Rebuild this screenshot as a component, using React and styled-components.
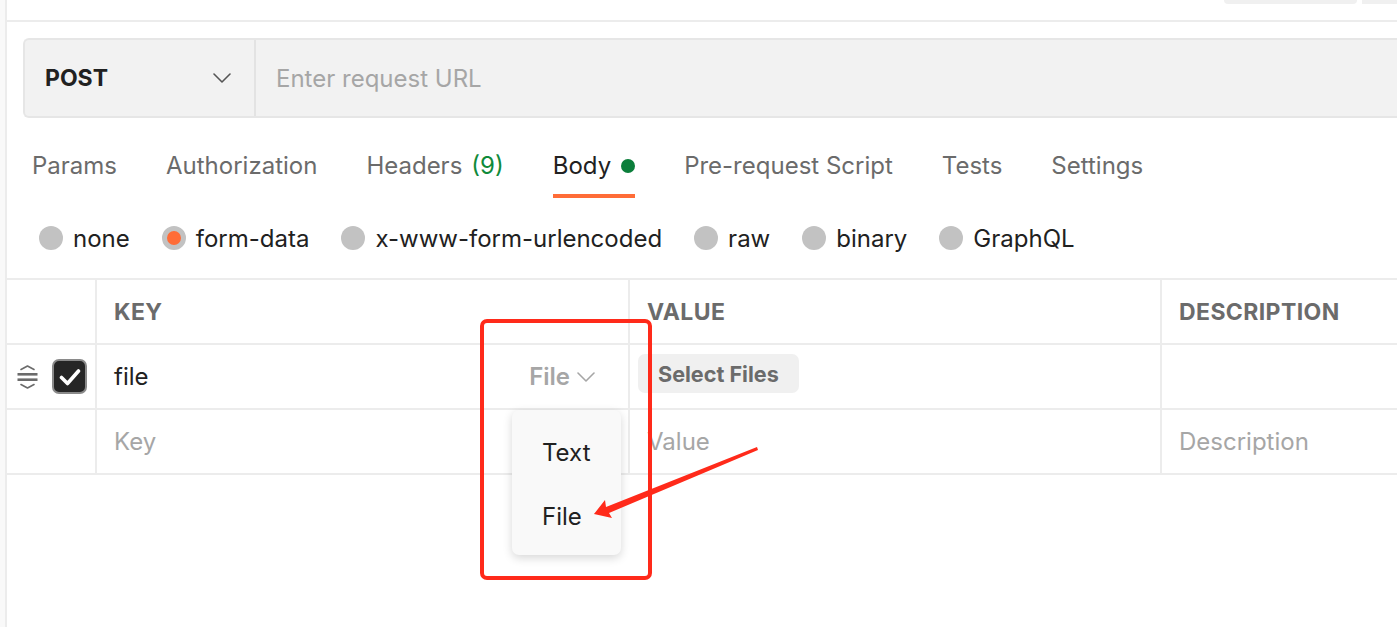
import React from "react";
import styled, { createGlobalStyle } from "styled-components";

const GlobalStyle = createGlobalStyle`
  html, body { margin: 0; padding: 0; background: #ffffff; }
  body { font-family: Inter, "Noto Sans", "Liberation Sans", sans-serif; color: #212121; }
  * { box-sizing: border-box; }
`;

const Shell = styled.div`
  position: relative;
  display: flex;
  width: 1397px;
  height: 627px;
  overflow: hidden;
  background: #f9f9f9;
`;

const Main = styled.div`
  flex: 1;
  margin-left: 5px;
  border-left: 2px solid #ececec;
  background: #ffffff;
  min-width: 0;
`;

const TopBar = styled.div`
  height: 22px;
  border-bottom: 2px solid #ececec;
  display: flex;
  justify-content: flex-end;
  align-items: flex-start;
  gap: 5px;
`;

const TopChip = styled.div`
  width: ${(p) => p.$w}px;
  height: 4px;
  background: #f0f0f0;
  border-radius: ${(p) => (p.$round ? "0 0 6px 6px" : "0")};
`;

const UrlBar = styled.div`
  margin: 16px 0 0 16px;
  width: 1400px;
  height: 80px;
  display: flex;
  background: #f2f2f2;
  border: 2px solid #e6e6e6;
  border-right: none;
  border-radius: 6px 0 0 6px;
`;

const Method = styled.div`
  width: 231px;
  flex: none;
  display: flex;
  align-items: center;
  justify-content: space-between;
  padding: 0 23px 0 20px;
  border-right: 2px solid #e3e3e3;
  font-size: 23px;
  font-weight: 700;
  color: #212121;
`;

const UrlInput = styled.div`
  flex: 1;
  display: flex;
  align-items: center;
  padding-left: 20px;
  font-size: 24px;
  color: #a6a6a6;
`;

const Tabs = styled.div`
  display: flex;
  gap: 49px;
  padding-left: 25px;
`;

const Tab = styled.div`
  display: flex;
  align-items: center;
  gap: 10px;
  padding: 33px 0 13px;
  line-height: 30px;
  font-size: 24px;
  color: ${(p) => (p.$active ? "#212121" : "#6b6b6b")};
  border-bottom: 4px solid ${(p) => (p.$active ? "#ff6c37" : "transparent")};
`;

const Count = styled.span`
  color: #0f8a3a;
  margin-left: 9px;
`;

const Dot = styled.span`
  width: 14px;
  height: 14px;
  border-radius: 50%;
  background: #0b7e3b;
`;

const BodyTypes = styled.div`
  height: 82px;
  display: flex;
  align-items: center;
  gap: 32px;
  padding-left: 32px;
  border-bottom: 2px solid #ececec;
`;

const RadioItem = styled.div`
  display: flex;
  align-items: center;
  gap: 10px;
  font-size: 24px;
  color: #212121;
`;

const Radio = styled.span`
  width: 24px;
  height: 24px;
  border-radius: 50%;
  background: ${(p) => (p.$checked ? "#ff6c37" : "#c2c2c2")};
  border: ${(p) => (p.$checked ? "5px solid #c2c2c2" : "none")};
`;

const Row = styled.div`
  display: grid;
  grid-template-columns: 90px 533px 532px 1fr;
  height: 65px;
  border-bottom: 2px solid #ececec;
`;

const Cell = styled.div`
  position: relative;
  display: flex;
  align-items: center;
  gap: ${(p) => p.$gap || 0}px;
  justify-content: ${(p) => p.$justify || "flex-start"};
  padding: ${(p) => p.$pad || "0 17px"};
  border-right: ${(p) => (p.$last ? "none" : "2px solid #ececec")};
  font-size: 24px;
  color: ${(p) => (p.$muted ? "#a6a6a6" : "#212121")};
`;

const HeadText = styled.span`
  font-size: 23px;
  font-weight: 700;
  letter-spacing: 0.4px;
  color: #6b6b6b;
`;

const Check = styled.span`
  width: 35px;
  height: 35px;
  border-radius: 7px;
  background: #262626;
  border: 2px solid #8a8a8a;
  display: flex;
  align-items: center;
  justify-content: center;
`;

const TypeSelect = styled.span`
  display: flex;
  align-items: center;
  gap: 7px;
  font-size: 24px;
  font-weight: 600;
  color: #a6a6a6;
`;

const SelectFiles = styled.span`
  height: 39px;
  display: flex;
  align-items: center;
  padding: 0 20px;
  border-radius: 7px;
  background: #f0f0f0;
  font-size: 21.6px;
  font-weight: 700;
  color: #6b6b6b;
  margin-top: -6px;
`;

const Menu = styled.div`
  position: absolute;
  z-index: 5;
  right: 7px;
  top: calc(100% + 2px);
  width: 109px;
  padding: 10px 0 7px;
  background: #f9f9f9;
  border-radius: 7px;
  box-shadow: 0 3px 10px rgba(0, 0, 0, 0.16);
`;

const MenuItem = styled.div`
  height: 64px;
  display: flex;
  align-items: center;
  padding-left: 30px;
  font-size: 24px;
  color: #212121;
`;

const Highlight = styled.div`
  position: absolute;
  z-index: 10;
  left: 480px;
  top: 319px;
  width: 172px;
  height: 261px;
  border: 4px solid #ff2a1a;
  border-radius: 7px;
  pointer-events: none;
`;

const ArrowLayer = styled.svg`
  position: absolute;
  z-index: 11;
  left: 0;
  top: 0;
  pointer-events: none;
`;

const Chevron = ({ w = 18, h = 10, color = "#555" }) => (
  <svg width={w} height={h} viewBox="0 0 18 10" fill="none">
    <path d="M1 1l8 8 8-8" stroke={color} strokeWidth="1.6" strokeLinecap="round" strokeLinejoin="round" />
  </svg>
);

const DragHandle = () => (
  <svg width="21" height="24" viewBox="0 0 21 24" fill="none">
    <path d="M4 4.5L10.5 1L17 4.5" stroke="#6b6b6b" strokeWidth="1.6" strokeLinecap="round" strokeLinejoin="round" />
    <rect x="0.5" y="8" width="20" height="2.6" fill="#6b6b6b" />
    <rect x="0.5" y="13.4" width="20" height="2.6" fill="#6b6b6b" />
    <path d="M4 19.5L10.5 23L17 19.5" stroke="#6b6b6b" strokeWidth="1.6" strokeLinecap="round" strokeLinejoin="round" />
  </svg>
);

const tabs = [
  { label: "Params" },
  { label: "Authorization" },
  { label: "Headers", count: "(9)" },
  { label: "Body", active: true, dot: true },
  { label: "Pre-request Script" },
  { label: "Tests" },
  { label: "Settings" },
];

const bodyTypes = ["none", "form-data", "x-www-form-urlencoded", "raw", "binary", "GraphQL"];

export default function App() {
  return (
    <>
      <GlobalStyle />
      <Shell>
        <Main>
          <TopBar>
            <TopChip $w={133} $round />
            <TopChip $w={35} />
          </TopBar>
          <UrlBar>
            <Method>
              POST
              <Chevron color="#555" />
            </Method>
            <UrlInput>Enter request URL</UrlInput>
          </UrlBar>
          <Tabs>
            {tabs.map((t) => (
              <Tab key={t.label} $active={t.active}>
                <span>
                  {t.label}
                  {t.count && <Count>{t.count}</Count>}
                </span>
                {t.dot && <Dot />}
              </Tab>
            ))}
          </Tabs>
          <BodyTypes>
            {bodyTypes.map((b) => (
              <RadioItem key={b}>
                <Radio $checked={b === "form-data"} />
                {b}
              </RadioItem>
            ))}
          </BodyTypes>
          <Row>
            <Cell />
            <Cell><HeadText>KEY</HeadText></Cell>
            <Cell><HeadText>VALUE</HeadText></Cell>
            <Cell $last><HeadText>DESCRIPTION</HeadText></Cell>
          </Row>
          <Row>
            <Cell $pad="0 0 0 10px" $gap={14}>
              <DragHandle />
              <Check>
                <svg width="22" height="18" viewBox="0 0 22 18" fill="none">
                  <path d="M2.5 9.5l6 6L19.5 3" stroke="#fff" strokeWidth="3.6" strokeLinecap="round" strokeLinejoin="round" />
                </svg>
              </Check>
            </Cell>
            <Cell $justify="space-between" $pad="0 33px 0 17px">
              file
              <TypeSelect>
                File
                <Chevron color="#a6a6a6" />
              </TypeSelect>
              <Menu>
                <MenuItem>Text</MenuItem>
                <MenuItem>File</MenuItem>
              </Menu>
            </Cell>
            <Cell $pad="0 0 0 8px">
              <SelectFiles>Select Files</SelectFiles>
            </Cell>
            <Cell $last />
          </Row>
          <Row>
            <Cell />
            <Cell $muted>Key</Cell>
            <Cell $muted>Value</Cell>
            <Cell $muted $last>Description</Cell>
          </Row>
        </Main>
        <Highlight />
        <ArrowLayer width="1397" height="627" viewBox="0 0 1397 627">
          <polygon
            points="594,514 605,500 606,507 757,447 758,450 609,513 612,518"
            fill="#ff2a1a"
          />
        </ArrowLayer>
      </Shell>
    </>
  );
}
